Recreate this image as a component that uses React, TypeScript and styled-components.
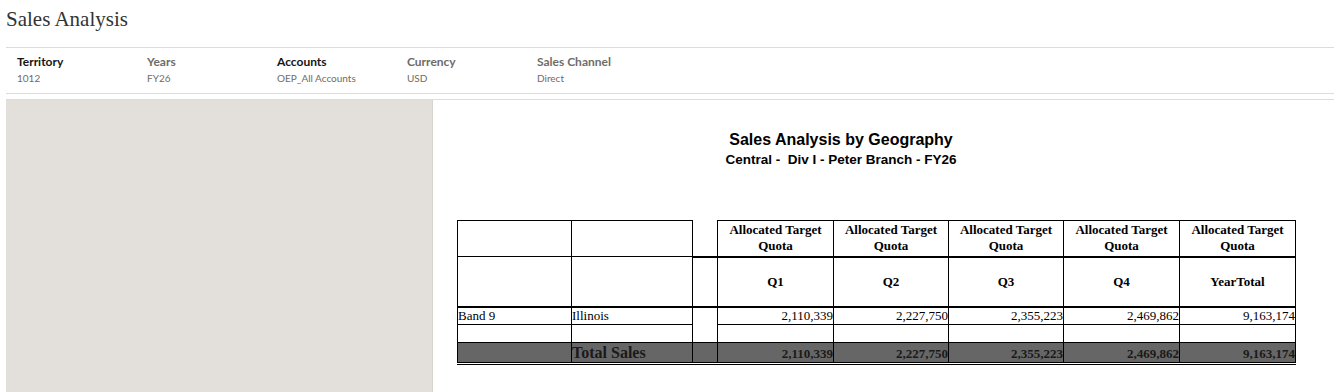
import React from "react";
import styled, { createGlobalStyle } from "styled-components";

const Global = createGlobalStyle`
  html, body { margin: 0; padding: 0; background: #fff; }
  body { width: 1334px; height: 392px; overflow: hidden; }
`;

const Page = styled.div`
  padding-left: 6px;
  height: 392px;
  display: flex;
  flex-direction: column;
`;

const TitleBar = styled.div`
  height: 47px;
  border-bottom: 1px solid #dcdcdc;
  box-sizing: content-box;
`;

const PageTitle = styled.h1`
  margin: 0;
  padding-top: 7px;
  font-family: "Liberation Serif", "Times New Roman", serif;
  font-weight: normal;
  font-size: 21px;
  line-height: 24px;
  color: #333;
`;

const FilterBar = styled.div`
  border-bottom: 1px solid #dcdcdc;
  display: grid;
  grid-template-columns: repeat(5, 130px);
  padding-left: 11px;
  padding-top: 6px;
  box-sizing: border-box;
  height: 46px;
`;

const Filter = styled.div`
  display: flex;
  flex-direction: column;
  font-family: Lato, "Noto Sans", sans-serif;
`;

const FilterLabel = styled.div<{ $active?: boolean }>`
  font-size: 12px;
  font-weight: 700;
  line-height: 15px;
  color: ${(p) => (p.$active ? "#161513" : "#6f6c67")};
`;

const FilterValue = styled.div`
  font-size: 10px;
  line-height: 12px;
  margin-top: 3px;
  color: #6f6c67;
`;

const Gap = styled.div`
  height: 5px;
  border-bottom: 1px solid #dcdcdc;
`;

const Content = styled.div`
  flex: 1;
  display: flex;
  min-height: 0;
`;

const SidePanel = styled.div`
  width: 426px;
  background: #e3e0db;
  border-right: 1px solid #d8d5d0;
`;

const Report = styled.div`
  flex: 1;
  background: #fff;
  padding-left: 24px;
  padding-top: 30px;
`;

const ReportHead = styled.div`
  width: 768px;
  text-align: center;
  font-family: "Liberation Sans", Arial, sans-serif;
  font-weight: 700;
  color: #000;
`;

const ReportTitle = styled.div`
  font-size: 16px;
  line-height: 20px;
`;

const ReportSub = styled.div`
  font-size: 13.5px;
  line-height: 16px;
  margin-top: 2px;
`;

const Table = styled.table`
  margin-top: 52px;
  border-collapse: collapse;
  table-layout: fixed;
  width: 838px;
  font-family: "Liberation Serif", "Times New Roman", serif;
  color: #000;
`;

type CellProps = {
  $top?: string;
  $bottom?: string;
  $left?: string;
  $right?: string;
};

const Cell = styled.td<CellProps>`
  padding: 0;
  border-top: ${(p) => p.$top ?? "1px solid #000"};
  border-bottom: ${(p) => p.$bottom ?? "1px solid #000"};
  border-left: ${(p) => p.$left ?? "1px solid #000"};
  border-right: ${(p) => p.$right ?? "1px solid #000"};
  font-size: 13px;
  line-height: 16px;
  white-space: nowrap;
  overflow: hidden;
`;

const HeadCell = styled(Cell)`
  font-weight: 700;
  text-align: center;
  white-space: normal;
  vertical-align: middle;
`;

const NumCell = styled(Cell)`
  text-align: right;
  vertical-align: bottom;
`;

const Row = styled.tr<{ $h: number; $total?: boolean }>`
  height: ${(p) => p.$h}px;
  background: ${(p) => (p.$total ? "#666666" : "transparent")};
`;

const TotalLabel = styled(Cell)`
  font-size: 16px;
  font-weight: 700;
  line-height: 18px;
  color: #1a1a1a;
  vertical-align: bottom;
`;

const TotalNum = styled(NumCell)`
  font-weight: 700;
  color: #1a1a1a;
`;

const quarters = ["Q1", "Q2", "Q3", "Q4", "YearTotal"];
const values = ["2,110,339", "2,227,750", "2,355,223", "2,469,862", "9,163,174"];
const THICK = "2px solid #000";
const NONE = "none";
const DOUBLE = "3px double #000";

export default function App() {
  return (
    <>
      <Global />
      <Page>
        <TitleBar>
          <PageTitle>Sales Analysis</PageTitle>
        </TitleBar>
        <FilterBar>
          <Filter>
            <FilterLabel $active>Territory</FilterLabel>
            <FilterValue>1012</FilterValue>
          </Filter>
          <Filter>
            <FilterLabel>Years</FilterLabel>
            <FilterValue>FY26</FilterValue>
          </Filter>
          <Filter>
            <FilterLabel $active>Accounts</FilterLabel>
            <FilterValue>OEP_All Accounts</FilterValue>
          </Filter>
          <Filter>
            <FilterLabel>Currency</FilterLabel>
            <FilterValue>USD</FilterValue>
          </Filter>
          <Filter>
            <FilterLabel>Sales Channel</FilterLabel>
            <FilterValue>Direct</FilterValue>
          </Filter>
        </FilterBar>
        <Gap />
        <Content>
          <SidePanel />
          <Report>
            <ReportHead>
              <ReportTitle>Sales Analysis by Geography</ReportTitle>
              <ReportSub>Central -&nbsp; Div I - Peter Branch - FY26</ReportSub>
            </ReportHead>
            <Table>
              <colgroup>
                <col style={{ width: 114 }} />
                <col style={{ width: 121 }} />
                <col style={{ width: 25 }} />
                <col style={{ width: 116 }} />
                <col style={{ width: 115 }} />
                <col style={{ width: 115 }} />
                <col style={{ width: 116 }} />
                <col style={{ width: 116 }} />
              </colgroup>
              <tbody>
                <Row $h={36}>
                  <Cell />
                  <Cell />
                  <Cell $top={NONE} $bottom={THICK} />
                  {quarters.map((q) => (
                    <HeadCell key={q} $bottom={THICK}>
                      Allocated Target Quota
                    </HeadCell>
                  ))}
                </Row>
                <Row $h={50}>
                  <Cell $bottom={THICK} />
                  <Cell $bottom={THICK} />
                  <Cell $top={THICK} $bottom={THICK} />
                  {quarters.map((q) => (
                    <HeadCell key={q} $top={THICK} $bottom={THICK}>
                      {q}
                    </HeadCell>
                  ))}
                </Row>
                <Row $h={18}>
                  <Cell $top={THICK}>Band 9</Cell>
                  <Cell $top={THICK}>Illinois</Cell>
                  <Cell $top={THICK} $bottom={NONE} rowSpan={2} />
                  {values.map((v) => (
                    <NumCell key={v} $top={THICK}>
                      {v}
                    </NumCell>
                  ))}
                </Row>
                <Row $h={18}>
                  <Cell />
                  <Cell />
                  {values.map((v) => (
                    <Cell key={v} />
                  ))}
                </Row>
                <Row $h={21} $total>
                  <Cell $bottom={DOUBLE} />
                  <TotalLabel $bottom={DOUBLE}>Total Sales</TotalLabel>
                  <Cell $bottom={DOUBLE} />
                  {values.map((v) => (
                    <TotalNum key={v} $bottom={DOUBLE}>
                      {v}
                    </TotalNum>
                  ))}
                </Row>
              </tbody>
            </Table>
          </Report>
        </Content>
      </Page>
    </>
  );
}
